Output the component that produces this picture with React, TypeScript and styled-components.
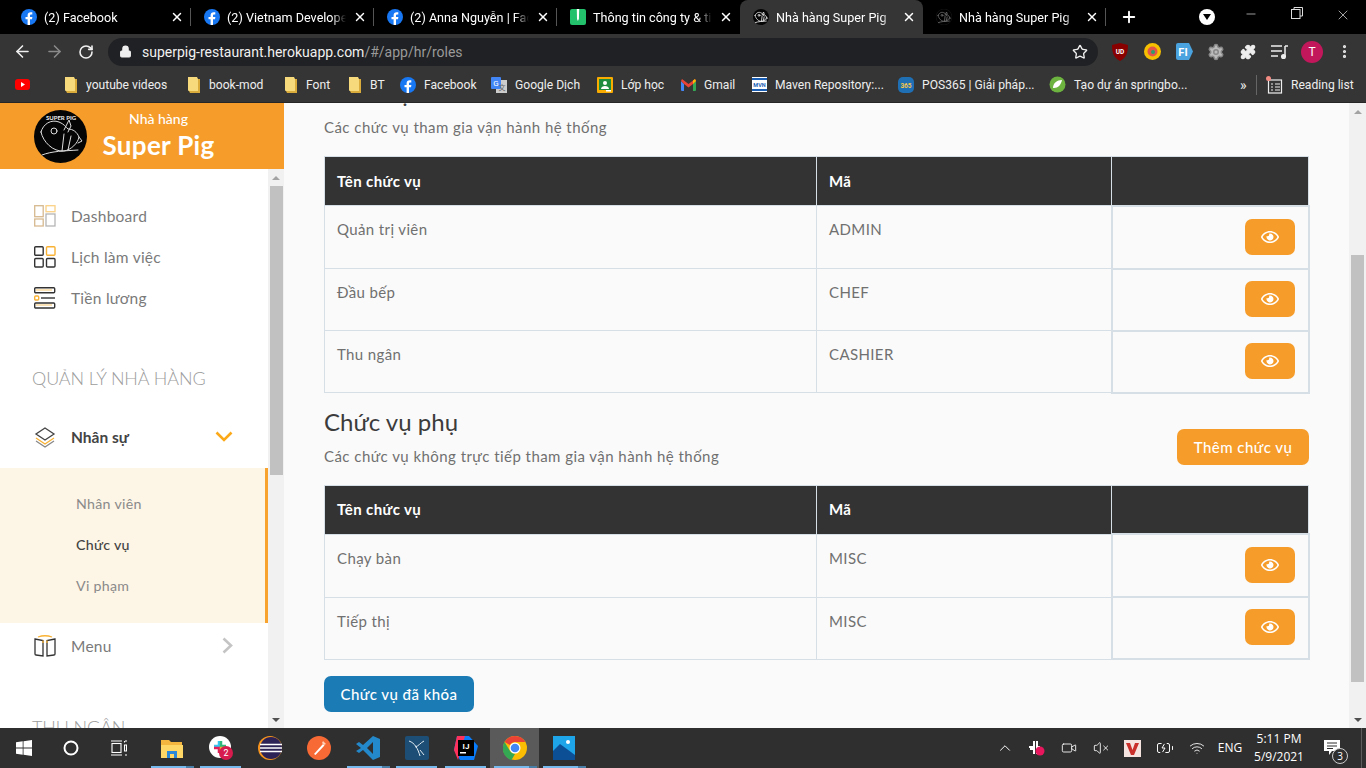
import React from "react";
import styled, { createGlobalStyle } from "styled-components";
import { ArrowLeft, ArrowRight, RotateCw, Lock, Star, Plus, X, Minus, Settings, Puzzle, MoreVertical, ChevronUp, VolumeX, Video, BatteryCharging, Wifi } from "lucide-react";
import { FaRegEye } from "react-icons/fa";

const Global = createGlobalStyle`
  html, body { margin: 0; padding: 0; width: 1366px; height: 768px; overflow: hidden; background: #fafafa; }
  * { box-sizing: border-box; }
`;

const Screen = styled.div`
  width: 1366px; height: 768px; display: flex; flex-direction: column; overflow: hidden;
  font-family: Lato, "Noto Sans", sans-serif;
`;

/* ---------- browser chrome ---------- */
const TabStrip = styled.div`
  height: 34px; background: #000; display: flex; padding-left: 8px; align-items: stretch; color: #fff;
  font: 12.6px Roboto, sans-serif; flex: none;
`;
const Tab = styled.div<{ $active?: boolean; $sep?: boolean }>`
  width: 183px; display: flex; align-items: center; padding: 0 7px 0 13px; gap: 7px; position: relative;
  background: ${p => (p.$active ? "#353535" : "transparent")};
  border-radius: 8px 8px 0 0;
  &::after {
    content: ""; position: absolute; right: 0; top: 8px; bottom: 8px; width: 1px;
    background: ${p => (p.$sep ? "#555" : "transparent")};
  }
`;
const TabLabel = styled.span`
  flex: 1; white-space: nowrap; overflow: hidden;
  mask-image: linear-gradient(to right, #000 88%, transparent);
`;
const PlusSlot = styled.div`
  width: 36px; display: flex; align-items: center; justify-content: center; margin-left: 5px;
`;
const Spacer = styled.div`flex: 1;`;
const Dropper = styled.div`
  width: 16px; height: 16px; border-radius: 50%; background: #fff; margin: 9px 13px 0 0;
  display: flex; align-items: center; justify-content: center;
  &::after { content: ""; border-left: 4px solid transparent; border-right: 4px solid transparent; border-top: 6px solid #000; }
`;
const WinBtn = styled.div`
  width: 46px; display: flex; justify-content: center; padding-top: 7px; color: #ddd;
`;
const Toolbar = styled.div`
  height: 33px; background: #353535; display: flex; align-items: center; flex: none; color: #e8e8e8;
  padding: 3px 0 1px 6px;
`;
const NavBtn = styled.div<{ $dim?: boolean }>`
  width: 32px; display: flex; justify-content: center; color: ${p => (p.$dim ? "#8a8a8a" : "#f0f0f0")};
`;
const UrlPill = styled.div`
  width: 990px; height: 28px; margin-left: 6px; border-radius: 14px; background: #202124; display: flex; align-items: center;
  padding: 0 10px 0 11px; font: 14px Roboto, sans-serif; color: #f0f0f0; gap: 10px;
`;
const UrlDim = styled.span`color: #9a9a9a;`;
const UrlText = styled.div`flex: 1;`;
const ExtSlot = styled.div`
  width: 32px; display: flex; justify-content: center; align-items: center;
`;
const ExtRow = styled.div`
  display: flex; margin-left: 6px; align-items: center;
`;
const Avatar = styled.div`
  width: 22px; height: 22px; border-radius: 50%; background: #c2185b; color: #fff; font: 12px Roboto, sans-serif;
  display: flex; align-items: center; justify-content: center;
`;
const Bookmarks = styled.div`
  height: 36px; background: #353535; border-bottom: 1px solid #262626; display: flex; align-items: center; flex: none;
  color: #eee; font: 12.1px Roboto, sans-serif; padding: 0 0 0 15px;
`;
const Bookmark = styled.div<{ $w: number }>`
  width: ${p => p.$w}px; display: flex; align-items: center; gap: 8px; white-space: nowrap; flex: none;
`;
const BarSep = styled.div`width: 1px; height: 20px; background: #666; margin: 0 9px 0 8px;`;
const More = styled.span`font-size: 14px; margin-left: 41px; flex: 0 0 8px;`;

/* ---------- page ---------- */
const Body = styled.div`flex: 1; min-height: 0; display: flex; background: #fafafa;`;
const Sidebar = styled.aside`width: 284px; flex: none; display: flex; flex-direction: column;`;
const Brand = styled.div`
  height: 66px; background: #f59c2b; display: flex; align-items: center; padding-left: 34px; gap: 15px; color: #fff; flex: none;
`;
const BrandText = styled.div`
  display: flex; flex-direction: column; align-items: center; width: 113px; margin-top: 2px;
`;
const BrandSmall = styled.div`font-size: 14px; font-weight: 500; line-height: 19px; margin-top: -4px;`;
const BrandBig = styled.div`font-size: 26px; font-weight: 700; line-height: 34px; white-space: nowrap; letter-spacing: .3px;`;
const SideScrollArea = styled.div`flex: 1; min-height: 0; display: flex;`;
const SideContent = styled.nav`
  width: 268px; background: #fff; overflow: hidden; padding-top: 26px; display: flex; flex-direction: column;
`;
const NavItem = styled.div<{ $bold?: boolean; $mt?: number }>`
  height: 41px; flex: none; display: flex; align-items: center; padding: 0 35px 0 34px; gap: 15px;
  margin-top: ${p => p.$mt ?? 0}px;
  font-size: 15.5px; color: ${p => (p.$bold ? "#444" : "#7a7a7a")}; font-weight: ${p => (p.$bold ? 700 : 400)};
  letter-spacing: ${p => (p.$bold ? "0" : ".25px")};
`;
const NavText = styled.span`flex: 1;`;
const SectionTitle = styled.div<{ $mt: number }>`
  margin-top: ${p => p.$mt}px; padding-left: 32px; font-size: 18px; font-weight: 300; color: #9c9c9c; height: 24px; line-height: 24px; flex: none; letter-spacing: -.1px;
  white-space: nowrap;
`;
const SubMenu = styled.div`
  margin-top: 11px; height: 155px; flex: none; background: #fdf5e5; border-right: 3px solid #f9a32f; padding: 15px 0 0 76px;
  display: flex; flex-direction: column;
`;
const SubItem = styled.div<{ $active?: boolean }>`
  height: 41px; display: flex; align-items: center; font-size: 14.2px; letter-spacing: .3px;
  color: ${p => (p.$active ? "#444" : "#8a8a8a")}; font-weight: ${p => (p.$active ? 500 : 400)};
`;
const ScrollTrack = styled.div<{ $w: number }>`
  width: ${p => p.$w}px; background: #f1f1f1; flex: none; display: flex; flex-direction: column; align-items: center;
`;
const ScrollArrow = styled.div<{ $down?: boolean }>`
  height: 17px; flex: none; display: flex; align-items: center; justify-content: center;
  &::after {
    content: ""; border-left: 4px solid transparent; border-right: 4px solid transparent;
    ${p => (p.$down ? "border-top: 4px solid #505050;" : "border-bottom: 4px solid #a3a3a3;")}
  }
`;
const ScrollThumb = styled.div<{ $top: number; $h: number }>`
  width: 13px; height: ${p => p.$h}px; margin-top: ${p => p.$top}px; background: #c1c1c1; flex: none;
`;
const ScrollGrow = styled.div`flex: 1;`;
const Main = styled.main`
  flex: 1; min-width: 0; overflow: hidden; padding: 0 40px 0 40px; display: flex; flex-direction: column;
  color: #444;
`;
const HeadRow = styled.div<{ $mt: number }>`
  margin-top: ${p => p.$mt}px; display: flex; justify-content: space-between; align-items: flex-end; flex: none;
`;
const H = styled.h2`
  margin: 0; font-size: 24px; font-weight: 400; line-height: 30px; color: #3c3c3c; letter-spacing: .05px;
`;
const Desc = styled.p`
  margin: 9px 0 0; font-size: 15px; line-height: 20px; color: #707070; letter-spacing: .45px;
`;
const Table = styled.table`
  margin-top: 19px; width: 984px; border-collapse: collapse; table-layout: fixed; flex: none; font-size: 15px; letter-spacing: .38px;
`;
const Th = styled.th<{ $w: number }>`
  width: ${p => p.$w}px; height: 49px; background: #333; color: #fff; text-align: left; font-weight: 700; padding: 0 12px 1px;
  border: 1px solid #d6dfe6; font-size: 15px;
`;
const Tr = styled.tr`
  &:first-child > td { height: 63px; }
`;
const Td = styled.td`
  height: 62px; border: 1px solid #d6dfe6; padding: 13px 12px 0; vertical-align: top; color: #707070; line-height: 20px;
`;
const ActionTd = styled.td`
  height: 62px; border: 2px solid #d6dfe6; padding: 11px 13px 0 0; text-align: right; vertical-align: top;
  tr:first-child > & { padding-top: 12px; }
`;
const EyeBtn = styled.button`
  width: 50px; height: 36px; border: 0; border-radius: 7px; background: #f59c2b; color: #fff; padding: 0;
  display: inline-flex; align-items: center; justify-content: center; vertical-align: top;
`;
const Primary = styled.button<{ $blue?: boolean; $w: number }>`
  width: ${p => p.$w}px; height: 36px; border: 0; border-radius: 7px; color: #fff; font: 500 15px Lato, "Noto Sans", sans-serif; letter-spacing: .45px;
  background: ${p => (p.$blue ? "#1b7bb5" : "#f59c2b")}; flex: none; padding: 0; margin-bottom: 1px;
`;
const FootRow = styled.div`margin-top: 16px; flex: none;`;

/* ---------- taskbar ---------- */
const Taskbar = styled.div`
  height: 40px; background: #2f2f2f; display: flex; align-items: stretch; flex: none; color: #fff; font: 12px "Open Sans", sans-serif;
`;
const TaskSlot = styled.div<{ $w?: number; $active?: boolean; $on?: boolean; $stack?: boolean; $ml?: number }>`
  width: ${p => p.$w ?? 49}px; flex: none; display: flex; align-items: center; justify-content: center; position: relative;
  margin-left: ${p => p.$ml ?? 0}px;
  background: ${p => (p.$active ? "#5a5a5a" : "transparent")};
  ${p => (p.$on ? `&::after { content: ""; position: absolute; left: 4px; right: ${p.$stack ? 2 : 4}px; bottom: 0; height: 2px;
     background: ${p.$stack ? "linear-gradient(to right, #76b9ed 81%, #4a7fa8 81%)" : "#76b9ed"}; }` : "")}
`;
const TrayItem = styled.div<{ $w: number }>`
  width: ${p => p.$w}px; flex: none; display: flex; align-items: center; justify-content: center; text-align: center; line-height: 18px; flex-direction: column; position: relative;
`;
const ShowDesktop = styled.div`
  width: 5px; margin-left: 6px; flex: none; border-left: 1px solid #5c5c5c;
`;
const NotifyBadge = styled.span`
  position: absolute; left: 21px; top: 20px; width: 16px; height: 16px; border-radius: 50%; border: 1px solid #ccc; background: #2f2f2f;
  font-size: 10px; line-height: 14px; text-align: center;
`;

const Fb = ({ s = 16 }: { s?: number }) => (
  <svg width={s} height={s} viewBox="0 0 16 16" style={{ flex: "none" }}>
    <circle cx="8" cy="8" r="8" fill="#1877f2" />
    <path d="M11 10.3l.4-2.3H9V6.6c0-.7.3-1.2 1.3-1.2h1V3.3C10.9 3.2 10.3 3.2 9.700 3.200 7.800 3.200 6.600 4.300 6.600 6.300V8H4.500v2.300h2.100V16h2.400v-5.700z" fill="#fff" />
  </svg>
);
const Sheet = () => (
  <svg width="16" height="16" viewBox="0 0 16 16" style={{ flex: "none" }}>
    <rect width="16" height="16" rx="2" fill="#23c16b" />
    <path d="M6.800 0h2.400l-.3 10-1 2-.9-2z" fill="#fff" />
  </svg>
);
const PigLogo = ({ s = 53, faint }: { s?: number; faint?: boolean }) => (
  <svg width={s} height={s} viewBox="0 0 53 53" style={{ flex: "none" }}>
    <circle cx="26.500" cy="26.500" r="26.500" fill={faint ? "#000" : "#050505"} stroke={faint ? "#333" : "none"} />
    <g fill="none" stroke={faint ? "#666" : "#ddd"} strokeWidth={s < 20 ? 3 : 1} strokeLinecap="round">
      <path d="M7 22c2-8 10-13 18-10 5 2 7 5 9 7 5 0 9 3 11 8-1 6-8 13-15 14-11 1-21-9-23-19z" />
      <circle cx="20" cy="21" r="3" />
      <path d="M30 20l5-10 2 6-3 6M37 26l-3 14M30 24l-2 17M45 27l3 4-4 2M8 45c10-4 22-4 36-5" />
    </g>
    {s > 20 && <text x="27" y="9.500" textAnchor="middle" fontSize="6" fill="#eee" fontFamily="Lato, sans-serif" fontWeight="700">SUPER PIG</text>}
  </svg>
);
const Folder = () => (
  <svg width="13" height="16" viewBox="0 0 13 16" style={{ flex: "none" }}>
    <path d="M0 0h9l1 2v12H1a1 1 0 0 1-1-1z" fill="#f7da7c" />
    <path d="M10 2h2v14H2l-1-2h9z" fill="#d9ac3b" />
  </svg>
);
const Yt = () => (
  <svg width="15" height="15" viewBox="0 0 15 15" style={{ flex: "none" }}>
    <rect y="2" width="15" height="11" rx="3" fill="#f00" />
    <path d="M6 5l4 2.500-4 2.500z" fill="#fff" />
  </svg>
);
const GT = () => (
  <svg width="16" height="16" viewBox="0 0 16 16" style={{ flex: "none" }}>
    <rect x="5" y="3" width="11" height="13" fill="#ccc" />
    <rect width="10" height="12" rx="1" fill="#4285f4" />
    <text x="5" y="9" textAnchor="middle" fontSize="8" fill="#fff" fontFamily="Roboto">G</text>
    <text x="11" y="13" textAnchor="middle" fontSize="7" fill="#666" fontFamily="Noto Sans CJK SC">文</text>
  </svg>
);
const Classroom = () => (
  <svg width="16" height="16" viewBox="0 0 16 16" style={{ flex: "none" }}>
    <rect width="16" height="16" rx="1" fill="#f9ab00" />
    <rect x="2" y="2" width="12" height="11" fill="#1e8e3e" />
    <circle cx="8" cy="6" r="2" fill="#fff" />
    <path d="M4 12c0-4 8-4 8 0z" fill="#fff" />
    <rect x="9" y="13" width="5" height="1.500" fill="#fff" />
  </svg>
);
const Gm = () => (
  <svg width="15" height="12" viewBox="0 0 15 12" style={{ flex: "none" }}>
    <path d="M0 2v9a1 1 0 0 0 1 1h2V5z" fill="#4285f4" />
    <path d="M15 2v9a1 1 0 0 1-1 1h-2V5z" fill="#34a853" />
    <path d="M0 2l1-2 6.500 5L14 0l1 2-3 3-4.500 3.500L3 5z" fill="#ea4335" />
    <path d="M12 5l3-3-1-2-2 1.500z" fill="#fbbc04" />
  </svg>
);
const Maven = () => (
  <svg width="15" height="15" viewBox="0 0 15 15" style={{ flex: "none" }}>
    <rect width="15" height="15" fill="#fff" />
    <rect y="1" width="15" height="2" fill="#1a5fb4" />
    <rect y="12" width="15" height="2" fill="#1a5fb4" />
    <text x="7.500" y="10" textAnchor="middle" fontSize="5.500" fontWeight="700" fill="#1a5fb4" fontFamily="Roboto">MVN</text>
  </svg>
);
const Pos = () => (
  <svg width="16" height="16" viewBox="0 0 16 16" style={{ flex: "none" }}>
    <rect width="16" height="16" rx="5" fill="#1f6fb5" />
    <text x="8" y="10.500" textAnchor="middle" fontSize="6.500" fontWeight="700" fill="#f6c64a" fontFamily="Roboto">365</text>
  </svg>
);
const Spring = () => (
  <svg width="17" height="17" viewBox="0 0 17 17" style={{ flex: "none" }}>
    <circle cx="8.500" cy="8.500" r="8" fill="#6db33f" />
    <path d="M4 12c0-5 4-8 9-8-1 5-4 8-8 8z" fill="#fff" />
  </svg>
);
const ReadingIcon = () => (
  <svg width="17" height="18" viewBox="0 0 17 18" style={{ flex: "none" }} fill="none" stroke="#eee" strokeWidth="1.200">
    <rect x="2.500" y="4" width="13" height="13" />
    <path d="M5 8h2M9 8h5M5 11h2M9 11h5M5 14h2M9 14h5" />
    <circle cx="2.500" cy="2.500" r="2.500" fill="#f28b82" stroke="none" />
  </svg>
);
const UBlock = () => (
  <svg width="16" height="18" viewBox="0 0 16 18">
    <path d="M8 0l8 2c0 8-2 13-8 16C2 15 0 10 0 2z" fill="#800" />
    <text x="8" y="11" textAnchor="middle" fontSize="6.500" fontWeight="700" fill="#fff" fontFamily="Roboto">UD</text>
  </svg>
);
const ColorExt = () => (
  <svg width="17" height="17" viewBox="0 0 17 17">
    <circle cx="8.500" cy="8.500" r="8.500" fill="#f6c000" />
    <circle cx="8.500" cy="8.500" r="5" fill="#e2564a" />
    <circle cx="9" cy="9" r="2" fill="#2e9e6a" />
  </svg>
);
const FiExt = () => (
  <svg width="17" height="17" viewBox="0 0 17 17">
    <path d="M0 2a2 2 0 0 1 2-2h11l4 8.500-4 8.500H2a2 2 0 0 1-2-2z" fill="#4aa3df" />
    <text x="7" y="13" textAnchor="middle" fontSize="11" fontWeight="700" fill="#fff" fontFamily="Roboto">FI</text>
  </svg>
);
const MusicList = () => (
  <svg width="18" height="16" viewBox="0 0 18 16" fill="none" stroke="#eee" strokeWidth="1.500">
    <path d="M0 2h11M0 7h11M0 12h7M14 2v10" />
    <circle cx="12.500" cy="12.500" r="1.800" fill="#eee" />
    <path d="M14 2h3" />
  </svg>
);

const DashIcon = () => (
  <svg width="22" height="22" viewBox="0 0 22 22" fill="none" strokeWidth="1.300" style={{ flex: "none", opacity: .75 }}>
    <rect x=".7" y=".7" width="8.500" height="11" stroke="#c9a16a" />
    <rect x="12" y=".7" width="9" height="6" stroke="#f9c25c" />
    <rect x="12" y="9" width="9" height="12" stroke="#9b9b9b" />
    <rect x=".7" y="14" width="8.500" height="7" stroke="#c9a16a" />
  </svg>
);
const GridIcon = () => (
  <svg width="22" height="22" viewBox="0 0 22 22" fill="none" strokeWidth="1.400" style={{ flex: "none" }}>
    <rect x=".7" y=".7" width="8.500" height="8.500" rx="1" stroke="#333" />
    <rect x="12.500" y=".7" width="8.500" height="8.500" rx="1" stroke="#f9b233" />
    <rect x=".7" y="12.500" width="8.500" height="8.500" rx="1" stroke="#333" />
    <rect x="12.500" y="12.500" width="8.500" height="8.500" rx="1" stroke="#333" />
  </svg>
);
const ListIcon = () => (
  <svg width="22" height="22" viewBox="0 0 22 22" fill="none" strokeWidth="1.400" style={{ flex: "none" }}>
    <rect x=".7" y=".7" width="20" height="5" rx="1" stroke="#333" />
    <path d="M2 3h16" stroke="#f9b233" strokeWidth=".7" />
    <rect x=".7" y="9" width="4" height="4" rx="1" stroke="#f9b233" />
    <path d="M7 11h14" stroke="#333" />
    <rect x=".7" y="16" width="20" height="5" rx="1" stroke="#333" />
    <path d="M2 18h16" stroke="#f9b233" strokeWidth=".7" />
  </svg>
);
const LayerIcon = () => (
  <svg width="22" height="22" viewBox="0 0 22 22" fill="none" strokeWidth="1.300" style={{ flex: "none" }}>
    <path d="M11 2l9 6-9 6-9-6z" stroke="#444" />
    <path d="M2 12l9 6 9-6" stroke="#f9b233" />
    <path d="M2 15l9 6 9-6" stroke="#888" />
  </svg>
);
const BookIcon = () => (
  <svg width="22" height="22" viewBox="0 0 22 22" fill="none" strokeWidth="1.300" style={{ flex: "none" }}>
    <path d="M4 2c4-1.400 10-1.400 14 0" stroke="#f9b233" />
    <path d="M1 4l8 1.500V21l-7-1a1 1 0 0 1-1-1z" stroke="#333" />
    <path d="M21 4l-8 1.500V21l7-1a1 1 0 0 0 1-1z" stroke="#333" />
    <path d="M9 8V5.500M13 8V5.500" stroke="#f9b233" />
  </svg>
);
const CaretDown = () => (
  <svg width="18" height="11" viewBox="0 0 18 11" fill="none" stroke="#fba919" strokeWidth="2.600" style={{ flex: "none" }}>
    <path d="M1.500 1.500L9 9l7.500-7.500" />
  </svg>
);
const CaretRight = () => (
  <svg width="11" height="17" viewBox="0 0 11 17" fill="none" stroke="#c4c4c4" strokeWidth="2.600" style={{ flex: "none" }}>
    <path d="M1.500 1.500L9 8.500l-7.500 7" />
  </svg>
);

const WinLogo = () => (
  <svg width="16" height="16" viewBox="0 0 16 16" fill="#fff">
    <path d="M0 2.300l6.700-1v6.300H0zM7.500 1.200L16 0v7.600H7.500zM0 8.400h6.700v6.300l-6.700-1zM7.500 8.400H16V16l-8.500-1.200z" />
  </svg>
);
const Cortana = () => <svg width="16" height="16"><circle cx="8" cy="8" r="6.500" fill="none" stroke="#fff" strokeWidth="2" /></svg>;
const TaskView = () => (
  <svg width="16" height="16" viewBox="0 0 16 16" fill="none" stroke="#fff" strokeWidth="1.100">
    <rect x="1" y="3.500" width="9" height="9" />
    <path d="M0 1h11M0 15h11M13.500 1v1.500M13.500 5h2v6h-2z" />
    <path d="M14 1h2M14 15h2" />
  </svg>
);
const Explorer = () => (
  <svg width="22" height="22" viewBox="0 0 22 22">
    <path d="M0 3h8l2 2h11v15H0z" fill="#f4b63f" />
    <rect y="8" width="22" height="13" fill="#ffd767" />
    <rect x="6" y="14" width="10" height="7" fill="#2b88d8" />
    <rect x="9" y="17" width="4" height="4" fill="#ffd767" />
  </svg>
);
const SlackApp = () => (
  <svg width="24" height="24" viewBox="0 0 24 24">
    <circle cx="11" cy="11" r="11" fill="#fff" />
    <path d="M10 5v5H5" stroke="#36c5f0" strokeWidth="2.500" fill="none" />
    <path d="M12 5v5h5" stroke="#2eb67d" strokeWidth="2.500" fill="none" />
    <path d="M10 17v-5H5" stroke="#e01e5a" strokeWidth="2.500" fill="none" />
    <path d="M12 17v-5h5" stroke="#ecb22e" strokeWidth="2.500" fill="none" />
    <circle cx="17" cy="17" r="7" fill="#d81b4e" />
    <text x="17" y="20" textAnchor="middle" fontSize="9" fill="#fff" fontFamily="Roboto">2</text>
  </svg>
);
const Eclipse = () => (
  <svg width="24" height="24" viewBox="0 0 24 24">
    <circle cx="12" cy="12" r="12" fill="#f7941e" />
    <circle cx="13" cy="12" r="11" fill="#2c2255" />
    <path d="M2 8.500h22M2 12h22M2 15.500h22" stroke="#fff" strokeWidth="1.300" />
  </svg>
);
const Postman = () => (
  <svg width="24" height="24" viewBox="0 0 24 24">
    <circle cx="12" cy="12" r="12" fill="#f76935" />
    <path d="M7 18l9-10 1.500 1.500-9 9.500z" fill="#fff" />
    <path d="M16 5l3 3-2 1-2-2z" fill="#ffd0b8" />
  </svg>
);
const VsCode = () => (
  <svg width="24" height="24" viewBox="0 0 24 24">
    <path d="M17 0l7 3v18l-7 3-10-10-4 3-3-2 5-3-5-4 3-2 4 3z" fill="#2489ca" />
    <path d="M17 6l-6 6 6 6z" fill="#2f2f2f" />
  </svg>
);
const Mysql = () => (
  <svg width="24" height="24" viewBox="0 0 24 24">
    <rect width="24" height="24" rx="2" fill="#1d4f76" />
    <path d="M4 5c6 2 9 8 11 15M10 11c4-1 5-4 9-6M15 14l4 5" stroke="#dfe9f1" strokeWidth="1" fill="none" />
  </svg>
);
const Intellij = () => (
  <svg width="24" height="24" viewBox="0 0 24 24">
    <path d="M3 0h12l9 10-4 14H6L0 14z" fill="#087cfa" />
    <path d="M0 14L3 0h8L4 24z" fill="#fe315d" />
    <rect x="4" y="4" width="16" height="16" fill="#000" />
    <text x="12" y="13" textAnchor="middle" fontSize="8" fontWeight="700" fill="#fff" fontFamily="Roboto">IJ</text>
    <rect x="6" y="16" width="6" height="1.500" fill="#fff" />
  </svg>
);
const ChromeApp = () => (
  <svg width="24" height="24" viewBox="0 0 24 24">
    <circle cx="12" cy="12" r="12" fill="#fbbc04" />
    <path d="M12 0a12 12 0 0 1 10.400 6H12a6 6 0 0 0-5.200 3L1.600 6A12 12 0 0 1 12 0z" fill="#ea4335" />
    <path d="M1.600 6L7 15a6 6 0 0 0 5 3l-3.500 6A12 12 0 0 1 1.600 6z" fill="#34a853" />
    <circle cx="12" cy="12" r="5.500" fill="#fff" />
    <circle cx="12" cy="12" r="4.300" fill="#4285f4" />
  </svg>
);
const Photos = () => (
  <svg width="22" height="24" viewBox="0 0 22 24">
    <rect width="22" height="24" fill="#1ea5e9" />
    <path d="M0 24V15l7-7 15 11v5z" fill="#0c4f95" />
    <circle cx="15" cy="6" r="2" fill="#fff" />
  </svg>
);
const SlackTray = () => (
  <svg width="16" height="16" viewBox="0 0 16 16">
    <path d="M5 1v6H0M8 1v6h3M5 14V9H1M8 14V9h2" stroke="#fff" strokeWidth="2" fill="none" />
    <circle cx="11" cy="11" r="4.500" fill="#e8175d" />
  </svg>
);
const VTray = () => (
  <svg width="17" height="17" viewBox="0 0 17 17">
    <rect width="17" height="17" fill="#f5e3e0" />
    <path d="M2 3h4l2.500 7L11 3h4l-5 12H7z" fill="#c9302c" />
  </svg>
);
const Notif = () => (
  <svg width="18" height="16" viewBox="0 0 18 16">
    <path d="M0 0h16v11h-8l-3 4v-4H0z" fill="#fff" />
    <path d="M3 3h10M3 6h10M3 8.500h6" stroke="#2f2f2f" />
  </svg>
);

type Row = { name: string; code: string };
const primary: Row[] = [
  { name: "Quản trị viên", code: "ADMIN" },
  { name: "Đầu bếp", code: "CHEF" },
  { name: "Thu ngân", code: "CASHIER" },
];
const secondary: Row[] = [
  { name: "Chạy bàn", code: "MISC" },
  { name: "Tiếp thị", code: "MISC" },
];

const RoleTable = ({ rows }: { rows: Row[] }) => (
  <Table>
    <thead>
      <tr>
        <Th $w={492}>Tên chức vụ</Th>
        <Th $w={295}>Mã</Th>
        <Th $w={197} />
      </tr>
    </thead>
    <tbody>
      {rows.map(r => (
        <Tr key={r.name}>
          <Td>{r.name}</Td>
          <Td>{r.code}</Td>
          <ActionTd>
            <EyeBtn><FaRegEye size={18} /></EyeBtn>
          </ActionTd>
        </Tr>
      ))}
    </tbody>
  </Table>
);

const tabs: { label: string; icon: React.ReactNode }[] = [
  { label: "(2) Facebook", icon: <Fb /> },
  { label: "(2) Vietnam Developers", icon: <Fb /> },
  { label: "(2) Anna Nguyễn | Facebook", icon: <Fb /> },
  { label: "Thông tin công ty & tin tức", icon: <Sheet /> },
  { label: "Nhà hàng Super Pig", icon: <PigLogo s={16} /> },
  { label: "Nhà hàng Super Pig", icon: <PigLogo s={16} faint /> },
];

const marks: { w: number; label: string; icon: React.ReactNode; }[] = [
  { w: 50, label: "", icon: <Yt /> },
  { w: 123, label: "youtube videos", icon: <Folder /> },
  { w: 97, label: "book-mod", icon: <Folder /> },
  { w: 64, label: "Font", icon: <Folder /> },
  { w: 51, label: "BT", icon: <Folder /> },
  { w: 91, label: "Facebook", icon: <Fb /> },
  { w: 106, label: "Google Dịch", icon: <GT /> },
  { w: 84, label: "Lớp học", icon: <Classroom /> },
  { w: 71, label: "Gmail", icon: <Gm /> },
  { w: 146, label: "Maven Repository:...", icon: <Maven /> },
  { w: 151, label: "POS365 | Giải pháp...", icon: <Pos /> },
  { w: 150, label: "Tạo dự án springbo...", icon: <Spring /> },
];

export default function App() {
  return (
    <Screen>
      <Global />
      <TabStrip>
        {tabs.map((t, i) => (
          <Tab key={i} $active={i === 4} $sep={i < 3 || i === 5}>
            {t.icon}
            <TabLabel>{t.label}</TabLabel>
            <X size={14} strokeWidth={2.5} />
          </Tab>
        ))}
        <PlusSlot><Plus size={18} strokeWidth={2.5} /></PlusSlot>
        <Spacer />
        <Dropper />
        <WinBtn><Minus size={14} strokeWidth={1.2} /></WinBtn>
        <WinBtn><svg width="12" height="12" viewBox="0 0 12 12" fill="none" stroke="#ddd"><rect x=".5" y="2.500" width="8.500" height="9" /><path d="M3 2.500V.5h8.500V9H9" /></svg></WinBtn>
        <WinBtn><X size={16} strokeWidth={1.1} /></WinBtn>
      </TabStrip>
      <Toolbar>
        <NavBtn><ArrowLeft size={19} /></NavBtn>
        <NavBtn $dim><ArrowRight size={19} /></NavBtn>
        <NavBtn><RotateCw size={16} strokeWidth={2.4} /></NavBtn>
        <UrlPill>
          <Lock size={13} fill="#eee" />
          <UrlText>superpig-restaurant.herokuapp.com<UrlDim>/#/app/hr/roles</UrlDim></UrlText>
          <Star size={16} />
        </UrlPill>
        <ExtRow>
          <ExtSlot><UBlock /></ExtSlot>
          <ExtSlot><ColorExt /></ExtSlot>
          <ExtSlot><FiExt /></ExtSlot>
          <ExtSlot><Settings size={18} fill="#bbb" color="#888" /></ExtSlot>
          <ExtSlot><Puzzle size={16} fill="#eee" /></ExtSlot>
          <ExtSlot><MusicList /></ExtSlot>
          <ExtSlot><Avatar>T</Avatar></ExtSlot>
          <ExtSlot><MoreVertical size={17} strokeWidth={2.5} /></ExtSlot>
        </ExtRow>
      </Toolbar>
      <Bookmarks>
        {marks.map((m, i) => (
          <Bookmark key={i} $w={m.w}>{m.icon}{m.label && <span>{m.label}</span>}</Bookmark>
        ))}
        <More>»</More>
        <BarSep />
        <Bookmark $w={86}><ReadingIcon />Reading list</Bookmark>
      </Bookmarks>
      <Body>
        <Sidebar>
          <Brand>
            <PigLogo />
            <BrandText>
              <BrandSmall>Nhà hàng</BrandSmall>
              <BrandBig>Super Pig</BrandBig>
            </BrandText>
          </Brand>
          <SideScrollArea>
            <SideContent>
              <NavItem><DashIcon /><NavText>Dashboard</NavText></NavItem>
              <NavItem><GridIcon /><NavText>Lịch làm việc</NavText></NavItem>
              <NavItem><ListIcon /><NavText>Tiền lương</NavText></NavItem>
              <SectionTitle $mt={48}>QUẢN LÝ NHÀ HÀNG</SectionTitle>
              <NavItem $bold $mt={26}><LayerIcon /><NavText>Nhân sự</NavText><CaretDown /></NavItem>
              <SubMenu>
                <SubItem>Nhân viên</SubItem>
                <SubItem $active>Chức vụ</SubItem>
                <SubItem>Vi phạm</SubItem>
              </SubMenu>
              <NavItem $mt={2}><BookIcon /><NavText>Menu</NavText><CaretRight /></NavItem>
              <SectionTitle $mt={49}>THU NGÂN</SectionTitle>
            </SideContent>
            <ScrollTrack $w={16}>
              <ScrollArrow />
              <ScrollThumb $top={0} $h={289} />
              <ScrollGrow />
              <ScrollArrow $down />
            </ScrollTrack>
          </SideScrollArea>
        </Sidebar>
        <Main>
          <HeadRow $mt={-25}>
            <div>
              <H>Chức vụ chính</H>
              <Desc>Các chức vụ tham gia vận hành hệ thống</Desc>
            </div>
          </HeadRow>
          <RoleTable rows={primary} />
          <HeadRow $mt={13}>
            <div>
              <H>Chức vụ phụ</H>
              <Desc>Các chức vụ không trực tiếp tham gia vận hành hệ thống</Desc>
            </div>
            <Primary $w={132}>Thêm chức vụ</Primary>
          </HeadRow>
          <RoleTable rows={secondary} />
          <FootRow><Primary $blue $w={150}>Chức vụ đã khóa</Primary></FootRow>
        </Main>
        <ScrollTrack $w={17}>
          <ScrollArrow />
          <ScrollThumb $top={135} $h={427} />
          <ScrollGrow />
          <ScrollArrow $down />
        </ScrollTrack>
      </Body>
      <Taskbar>
        <TaskSlot $w={47}><WinLogo /></TaskSlot>
        <TaskSlot $w={48}><Cortana /></TaskSlot>
        <TaskSlot $w={48}><TaskView /></TaskSlot>
        <TaskSlot $on $stack $ml={4}><Explorer /></TaskSlot>
        <TaskSlot $on><SlackApp /></TaskSlot>
        <TaskSlot><Eclipse /></TaskSlot>
        <TaskSlot><Postman /></TaskSlot>
        <TaskSlot $on $stack><VsCode /></TaskSlot>
        <TaskSlot $on><Mysql /></TaskSlot>
        <TaskSlot $on><Intellij /></TaskSlot>
        <TaskSlot $on $stack $active><ChromeApp /></TaskSlot>
        <TaskSlot $on $stack><Photos /></TaskSlot>
        <Spacer />
        <TrayItem $w={32}><ChevronUp size={18} strokeWidth={1.3} /></TrayItem>
        <TrayItem $w={32}><SlackTray /></TrayItem>
        <TrayItem $w={32}><Video size={16} strokeWidth={1.3} /></TrayItem>
        <TrayItem $w={31}><VolumeX size={16} strokeWidth={1.3} /></TrayItem>
        <TrayItem $w={32}><VTray /></TrayItem>
        <TrayItem $w={33}><BatteryCharging size={18} strokeWidth={1.3} /></TrayItem>
        <TrayItem $w={32}><Wifi size={16} strokeWidth={1.3} /></TrayItem>
        <TrayItem $w={34}>ENG</TrayItem>
        <TrayItem $w={64}><div>5:11 PM</div><div>5/9/2021</div></TrayItem>
        <TrayItem $w={44}><Notif /><NotifyBadge>3</NotifyBadge></TrayItem>
        <ShowDesktop />
      </Taskbar>
    </Screen>
  );
}
